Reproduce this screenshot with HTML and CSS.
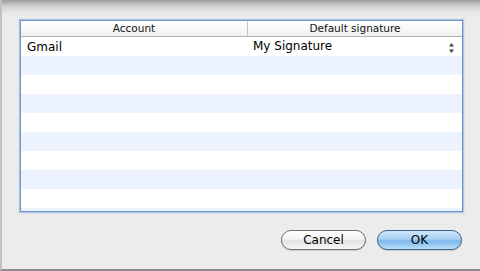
FILE: index.html
```html
<!DOCTYPE html>
<html lang="en">
<head>
    <meta charset="UTF-8">
    <title>Signatures</title>
    <link rel="stylesheet" href="styles.css">
</head>
<body>
<div class="dialog">
    <div class="list">
        <div class="list-head">
            <div class="col col-account">Account</div>
            <div class="col col-signature">Default signature</div>
        </div>
        <div class="list-body">
            <div class="row">
                <div class="cell cell-account">Gmail</div>
                <div class="cell cell-signature">
                    <span>My Signature</span>
                    <svg class="stepper" width="7" height="13" viewBox="0 0 7 13">
                        <path d="M3.5 2 L6 5.5 L1 5.5 Z" fill="#444"/>
                        <path d="M1 8.5 L6 8.5 L3.5 12 Z" fill="#444"/>
                    </svg>
                </div>
            </div>
        </div>
    </div>
    <div class="buttons">
        <button class="btn">Cancel</button>
        <button class="btn btn-default">OK</button>
    </div>
</div>
</body>
</html>
```

FILE: styles.css
```css
body, html {
    margin: 0;
    height: 100%;
    font-family: "DejaVu Sans", "Liberation Sans", sans-serif;
    background-color: #ececec;
    overflow: hidden;
}

.dialog {
    box-sizing: border-box;
    height: 271px;
    width: 480px;
    padding: 20px 18px 0 20px;
    background: linear-gradient(#9c9c9c 0, #cfcfcf 6px, #e6e6e6 12px, #ececec 16px, #ececec 100%);
    border-left: 2px solid #c2c2c2;
    border-bottom: 2px solid #8e8e8e;
    display: flex;
    flex-direction: column;
}

.list {
    margin-left: -2px;
    width: 441px;
    height: 190px;
    border: 1px solid #6f95c8;
    box-shadow: 0 0 1px 1px rgba(130, 170, 220, 0.6);
    background: #fff;
    display: flex;
    flex-direction: column;
}

.list-head {
    display: flex;
    height: 15px;
    background: linear-gradient(#ffffff, #f0f0f0);
    border-bottom: 1px solid #b3b3b3;
    font-size: 10.5px;
    line-height: 15px;
    color: #111;
}

.col {
    text-align: center;
}

.col-account {
    width: 226px;
    border-right: 1px solid #c4c4c4;
}

.col-signature {
    flex: 1;
}

.list-body {
    flex: 1;
    background: repeating-linear-gradient(#ffffff 0, #ffffff 19px, #edf3fe 19px, #edf3fe 38px);
}

.row {
    display: flex;
    height: 19px;
    font-size: 12px;
    line-height: 21px;
    color: #000;
}

.cell-account {
    width: 227px;
    padding-left: 6px;
    box-sizing: border-box;
}

.cell-signature {
    flex: 1;
    display: flex;
    justify-content: space-between;
    align-items: center;
    padding-left: 5px;
    padding-right: 7px;
}

.stepper {
    margin-top: 2px;
}

.buttons {
    display: flex;
    justify-content: flex-end;
    gap: 11px;
    margin-top: 18px;
}

.btn {
    width: 85px;
    height: 20px;
    padding: 0;
    border-radius: 10px;
    border: 1px solid #6e6e6e;
    background: linear-gradient(#ffffff 0%, #f3f3f3 45%, #e4e4e4 55%, #f7f7f7 100%);
    font-family: "DejaVu Sans", "Liberation Sans", sans-serif;
    font-size: 12px;
    color: #000;
    box-shadow: 0 1px 1px rgba(0, 0, 0, 0.15);
}

.btn-default {
    border-color: #3f5f8c;
    background: linear-gradient(#cfe6fb 0%, #a9d1f4 45%, #7cb6ec 55%, #b9e0fb 100%);
}
```
